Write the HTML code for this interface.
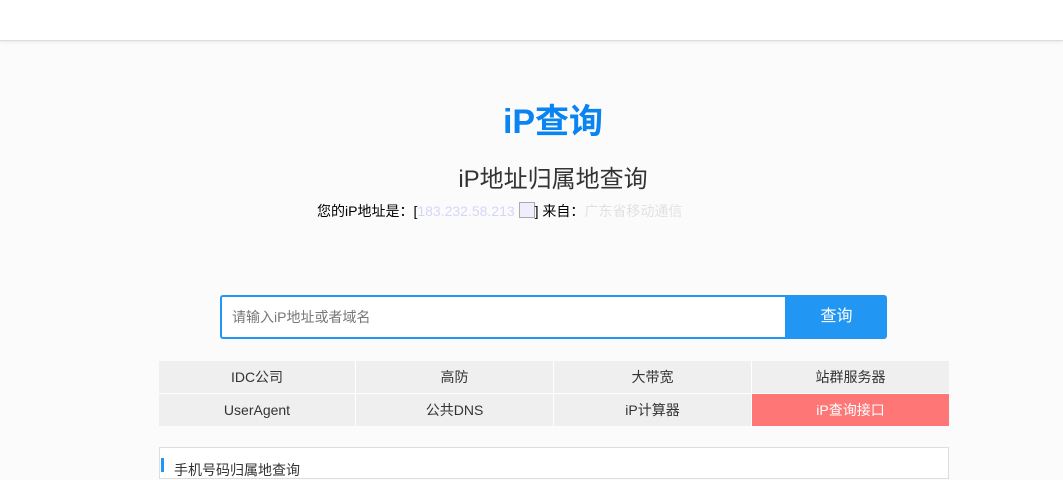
<!DOCTYPE html><html><head><meta charset="utf-8"><style>
body{margin:0;width:1063px;height:463px;overflow:hidden;background:#fbfbfb;font-family:"Liberation Sans","Noto Sans CJK SC",sans-serif;color:#333;position:relative}
.hd{position:absolute;left:0;top:0;width:1063px;height:40px;background:#fff;border-bottom:1px solid #ddd;box-shadow:0 1px 3px rgba(0,0,0,.08)}
.logo{position:absolute;left:0;width:1106px;top:100px;text-align:center;font-size:34px;font-weight:bold;color:#0a84f0;line-height:44px}
.t{position:absolute;left:0;width:1106px;top:164px;text-align:center;font-size:24px;line-height:32px;color:#333}
.info{position:absolute;left:317px;top:201px;font-size:14px;line-height:20px;color:#000}
.in{position:absolute;left:220px;top:295px;height:40px;border:2px solid #2196f3;border-radius:3px 0 0 3px;background:#fff;font-size:14px;color:#777;line-height:40px;padding-left:10px;box-sizing:content-box;width:553px}
.btn{position:absolute;left:786px;top:295px;width:101px;height:44px;background:#2196f3;color:#fff;font-size:16px;text-align:center;line-height:44px;border-radius:0 3px 3px 0}
.g{position:absolute;left:159px;top:361px;width:789px;display:grid;grid-template-columns:196px 197px 197px 197px;gap:1px 1px;background:#fff}
.g div{background:#efefef;height:32px;line-height:32px;text-align:center;font-size:14px;color:#333}
.g .r{background:#fe7676;color:#fff}
.p{position:absolute;left:159px;top:447px;width:788px;height:30px;border:1px solid #ddd;background:#fff}
.p i{position:absolute;left:1px;top:10px;width:3px;height:14px;background:#2196f3}
.p span{position:absolute;left:14px;top:12px;font-size:14px;color:#333}
</style></head><body>
<div class="hd"></div>
<div class="logo">iP查询</div>
<div class="t">iP地址归属地查询</div>
<div class="info">您的iP地址是：[<span style="color:#00f;opacity:.15">183.232.58.213</span> <span style="display:inline-block;width:14px;height:14px;border:1px solid #aaa;vertical-align:-2px;background:#eef"></span>] 来自：<span style="opacity:.1">广东省移动通信</span></div>
<div class="in">请输入iP地址或者域名</div>
<div class="btn">查询</div>
<div class="g"><div>IDC公司</div><div>高防</div><div>大带宽</div><div>站群服务器</div><div>UserAgent</div><div>公共DNS</div><div>iP计算器</div><div class="r">iP查询接口</div></div>
<div class="p"><i></i><span>手机号码归属地查询</span></div>
</body></html>
